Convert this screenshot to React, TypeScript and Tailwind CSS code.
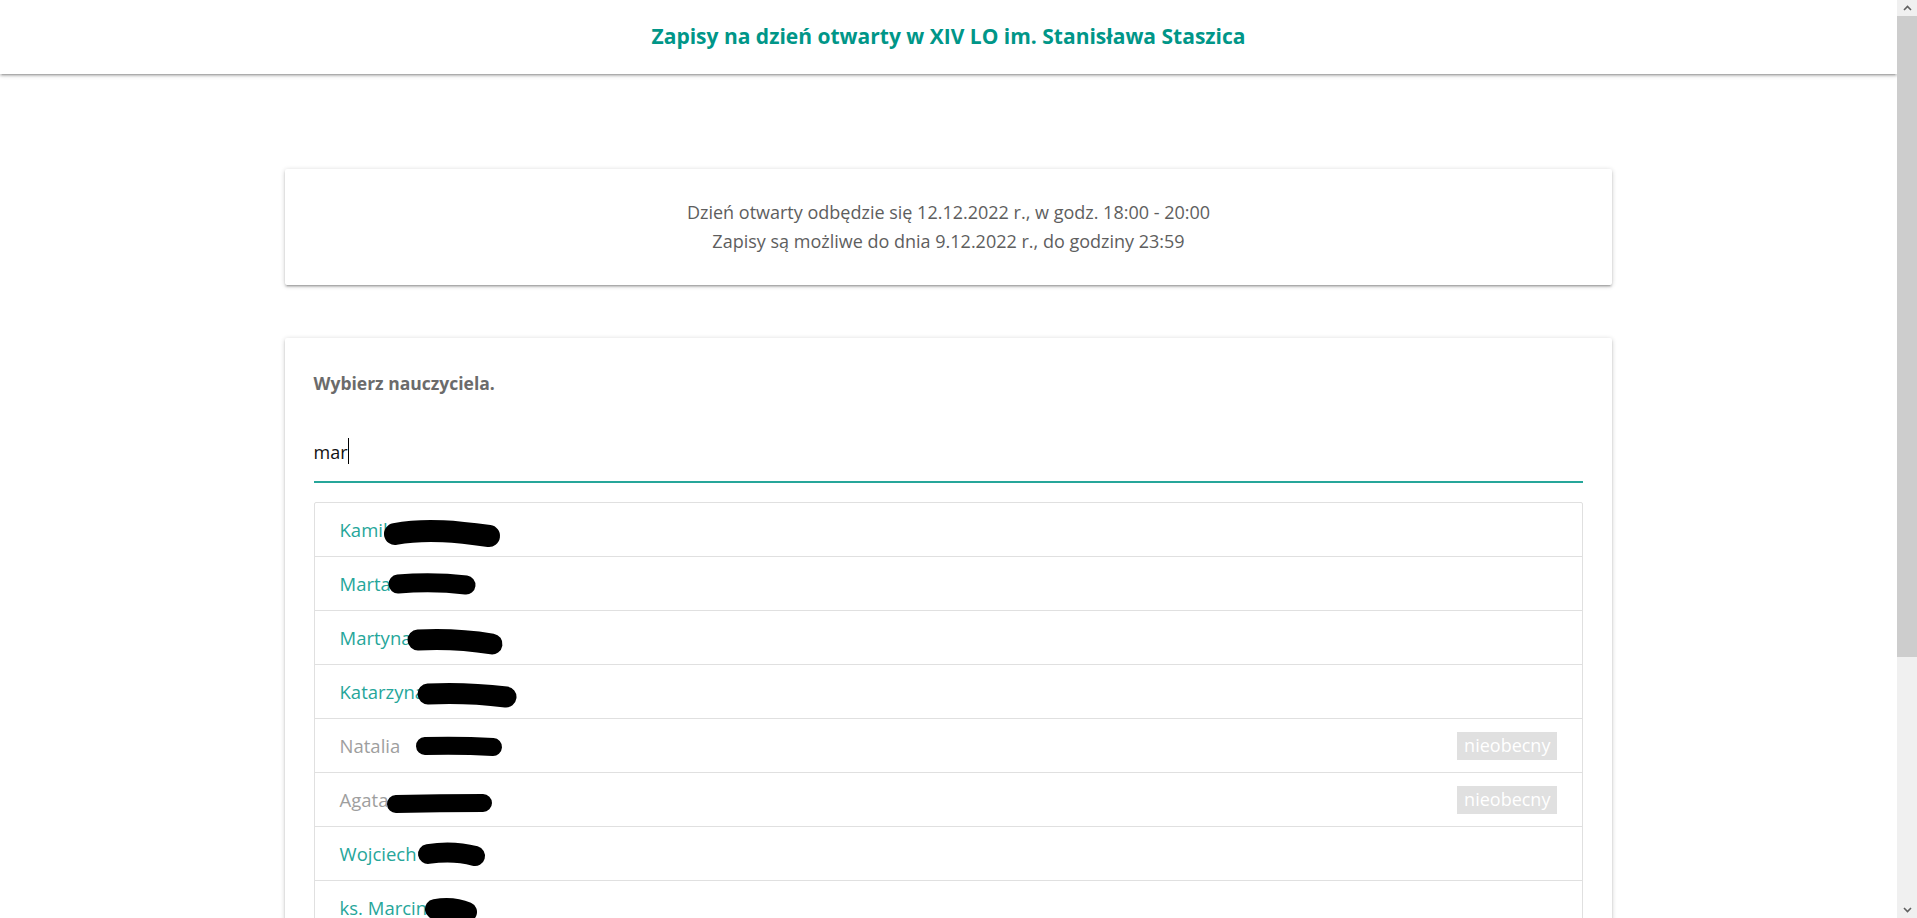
import React from "react";

type Row = { name: string; absent?: boolean; path?: string; w?: number };

const rows: Row[] = [
  { name: "Kamil", path: "M80 31 C 112 25, 145 29, 174 33", w: 22 },
  { name: "Marta", path: "M83 27 Q 118 24 151 28", w: 19 },
  { name: "Martyna", path: "M103 29 Q 140 27 177 33", w: 21 },
  { name: "Katarzyna", path: "M113 29 Q 150 27 191 32", w: 21 },
  { name: "Natalia", absent: true, path: "M110 27 Q 145 26 178 28", w: 18 },
  { name: "Agata", absent: true, path: "M81 31 Q 125 30 168 30", w: 18 },
  { name: "Wojciech", path: "M113 27 Q 138 23 160 29", w: 20 },
  { name: "ks. Marcin", path: "M120 28 Q 138 25 152 31", w: 20 },
  { name: "Marek", path: "M85 29 Q 120 26 160 30", w: 20 },
  { name: "Marzena", path: "M105 29 Q 140 26 175 31", w: 20 },
  { name: "Mariusz", path: "M100 28 Q 135 26 170 30", w: 20 },
  { name: "Małgorzata", path: "M125 29 Q 160 27 195 31", w: 20 },
  { name: "Tomasz", path: "M95 28 Q 130 26 165 30", w: 20 },
];

const cardShadow =
  "shadow-[0_2px_2px_0_rgba(0,0,0,0.14),0_3px_1px_-2px_rgba(0,0,0,0.12),0_1px_5px_0_rgba(0,0,0,0.2)]";

function Chevron({ up }: { up?: boolean }) {
  return (
    <svg width="9" height="6" viewBox="0 0 9 6" fill="none">
      <path
        d={up ? "M1 5 L4.5 1.5 L8 5" : "M1 1 L4.5 4.5 L8 1"}
        stroke="#606060"
        strokeWidth="1.6"
      />
    </svg>
  );
}

export default function App() {
  return (
    <div
      className="h-screen flex overflow-hidden bg-white"
      style={{ fontFamily: '"Open Sans", "Noto Sans", sans-serif' }}
    >
      <div className="flex-1 min-w-0 overflow-hidden">
        <header
          className={`h-[74px] bg-white flex items-center justify-center ${cardShadow}`}
        >
          <h1 className="text-[21px] font-bold text-[#009688]">
            Zapisy na dzień otwarty w XIV LO im. Stanisława Staszica
          </h1>
        </header>

        <main className="w-[70%] mx-auto pb-[32px]">
          <section
            className={`mt-[95px] bg-white rounded-[2px] ${cardShadow} py-[29px] text-center text-[18px] leading-[29px] text-[#5e5e5e]`}
          >
            <p>Dzień otwarty odbędzie się 12.12.2022 r., w godz. 18:00 - 20:00</p>
            <p>Zapisy są możliwe do dnia 9.12.2022 r., do godziny 23:59</p>
          </section>

          <section
            className={`mt-[53px] bg-white rounded-[2px] ${cardShadow} px-[29px] pt-[33px] pb-[30px]`}
          >
            <p className="text-[17.5px] font-bold text-[#6b6b6b] leading-[25px]">
              Wybierz nauczyciela.
            </p>

            <div className="mt-[26px] h-[61px] border-b-2 border-[#26a69a] flex items-center">
              <span className="text-[18px] text-[#111] leading-[26px] mt-[0px]">mar</span>
              <span className="w-px h-[26px] bg-black mt-[-2px]" />
            </div>

            <ul className="mt-[19px] border border-[#e0e0e0] rounded-[2px]">
              {rows.map((r, i) => (
                <li
                  key={i}
                  className="relative h-[54px] flex items-center justify-between px-[25px] border-b border-[#e0e0e0] last:border-b-0"
                >
                  <span
                    className={`text-[18.5px] ${r.absent ? "text-[#9e9e9e]" : "text-[#26a69a]"}`}
                  >
                    {r.name}
                  </span>
                  {r.absent && (
                    <span className="h-[28px] px-[7px] flex items-center bg-[#e0e0e0] text-white text-[18px]">
                      nieobecny
                    </span>
                  )}
                  {r.path && (
                    <svg
                      className="absolute left-0 top-0 pointer-events-none"
                      width="260"
                      height="54"
                      viewBox="0 0 260 54"
                      fill="none"
                    >
                      <path
                        d={r.path}
                        stroke="#000"
                        strokeWidth={r.w}
                        strokeLinecap="round"
                        strokeLinejoin="round"
                      />
                    </svg>
                  )}
                </li>
              ))}
            </ul>
          </section>
        </main>
      </div>

      <div className="w-[20px] shrink-0 h-full bg-[#f0f0f0] flex flex-col">
        <div className="h-[16px] flex items-center justify-center">
          <Chevron up />
        </div>
        <div className="h-[641px] bg-[#cdcdcd]" />
        <div className="flex-1" />
        <div className="h-[16px] flex items-center justify-center">
          <Chevron />
        </div>
      </div>
    </div>
  );
}
